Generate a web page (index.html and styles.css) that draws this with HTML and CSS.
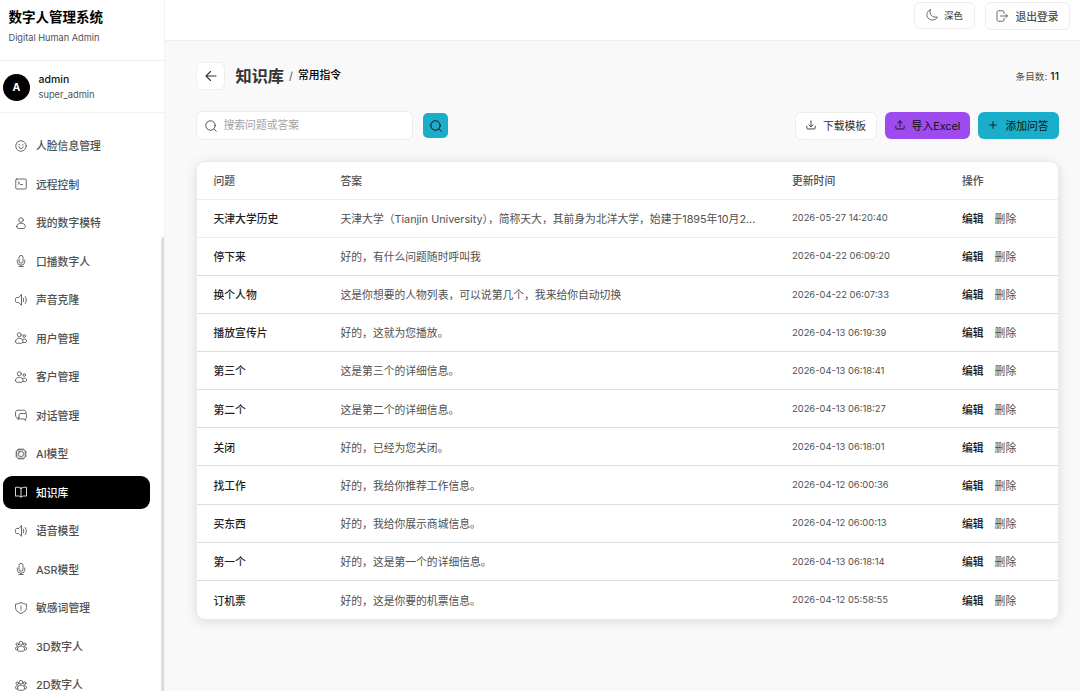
FILE: index.html
```html
<!DOCTYPE html>
<html lang="zh-CN">
<head>
  <meta charset="UTF-8" />
  <meta name="viewport" content="width=device-width, initial-scale=1" />
  <title>数字人管理系统</title>
  <link rel="stylesheet" href="styles.css">
</head>
<body>

  <!-- icons -->
  <svg class="sprite">
    <symbol id="i-face" viewBox="0 0 24 24"><circle cx="12" cy="12" r="10.500"/><path d="M8.500 8.800v1.400M15.500 8.800v1.400M7.500 13.500a4.600 4.600 0 0 0 9 0"/></symbol>
    <symbol id="i-terminal" viewBox="0 0 24 24"><rect x="1.500" y="2" width="21" height="20" rx="2"/><path d="M6 7.500l3.500 2.500L6 12.500M11 13h4"/></symbol>
    <symbol id="i-user" viewBox="0 0 24 24"><circle cx="12" cy="6" r="4.500"/><path d="M3.500 19c0-4.500 3.500-6.500 8.500-6.500s8.500 2 8.500 6.500c0 2.500-1.500 4-3.500 4H7c-2 0-3.500-1.500-3.500-4z"/></symbol>
    <symbol id="i-mic" viewBox="0 0 24 24"><rect x="8" y="0.800" width="8" height="15.500" rx="4"/><path d="M4.500 10v3a7.500 7.500 0 0 0 15 0v-3M12 20.500V23M7.500 23.200h9"/></symbol>
    <symbol id="i-sound" viewBox="0 0 24 24"><path d="M13 1.500v21l-6-5.500H3.500C1.600 17 .6 15.500.6 12S1.600 7 3.500 7H7zM16.500 8c1.300 2.500 1.300 5.500 0 8M20.500 5c3 4.500 3 9.500 0 14"/></symbol>
    <symbol id="i-users" viewBox="0 0 24 24"><circle cx="8.500" cy="5.500" r="4"/><circle cx="18.500" cy="8" r="2.700"/><path d="M1 19c0-4.500 3.500-6.500 7.500-6.500S16 14.500 16 19c0 2-1.300 3.500-3 3.500H4c-1.700 0-3-1.500-3-3.500zM15.500 14.800c3.500-2 7.800-.3 7.800 3.700 0 1.700-1 2.500-2.500 2.500h-5"/></symbol>
    <symbol id="i-chat" viewBox="0 0 24 24"><path d="M8 17H6.500v4.500L3 16.700C1.500 15.500 1 14 1 12V7.500c0-3.500 1.500-5 5-5h11c3.500 0 5 1.500 5 5V9"/><path d="M12 9h8c2 0 3.200 1 3.200 3v4.500c0 1.500-.7 2.500-2.200 3V23l-3-3h-6c-2.500 0-4-1-4-3v-4c0-2.800 1.200-4 4-4z"/></symbol>
    <symbol id="i-chip" viewBox="0 0 24 24"><rect x="3.500" y="3.500" width="17" height="17" rx="3"/><rect x="7.500" y="7.500" width="9" height="9" rx="1"/><path d="M8 1.500v2M12 1.500v2M16 1.500v2M8 20.500v2M12 20.500v2M16 20.500v2M1.500 8h2M1.500 12h2M1.500 16h2M20.500 8h2M20.500 12h2M20.500 16h2"/></symbol>
    <symbol id="i-book" viewBox="0 0 24 24"><path d="M12 4.500C9 2.300 5 2 1 2.800v17.500c4-.8 8-.5 11 1.700 3-2.200 7-2.500 11-1.700V2.800C19 2 15 2.300 12 4.500zM12 4.500V22"/></symbol>
    <symbol id="i-shield" viewBox="0 0 24 24"><path d="M12 1c3 2 6.500 3 11 3.300V11c0 6-4.500 9.500-11 12.200C5.500 20.500 1 17 1 11V4.300C5.500 4 9 3 12 1zM12 8v5.500M12 15.500v1"/></symbol>
    <symbol id="i-team" viewBox="0 0 24 24"><circle cx="12" cy="6.500" r="3.800"/><circle cx="4.500" cy="8.500" r="2.500"/><circle cx="19.500" cy="8.500" r="2.500"/><path d="M5 18.300c0-4 3-6 7-6s7 2 7 6c0 2.500-1.300 4.200-3.500 4.200h-7C6.300 22.500 5 20.800 5 18.300zM5 19.800H3c-3.300 0-2.800-6.300 1.500-6.300h1.500M19 19.800h2c3.300 0 2.800-6.300-1.500-6.300H18"/></symbol>
    <symbol id="i-moon" viewBox="0 0 24 24"><path d="M8.500 1.500C1.500 4.500-.3 12.500 4 18c4.500 6 15 5.500 19-2C13 18 5.500 11 8.500 1.500z"/></symbol>
    <symbol id="i-logout" viewBox="0 0 24 24"><path d="M16 7V4c0-1.500-1-2.500-2.500-2.500h-8C3.500 1.500 2 2.700 2 4.500v15c0 1.800 1.500 3 3.500 3h8c1.500 0 2.500-1 2.500-2.500v-3M9 12h14M19.500 8.500L23 12l-3.500 3.500"/></symbol>
    <symbol id="i-back" viewBox="0 0 24 24"><path d="M22 12H2M11 3l-9 9 9 9"/></symbol>
    <symbol id="i-search" viewBox="0 0 24 24"><circle cx="11" cy="11" r="9.500"/><path d="M18 18l4.500 4.500"/></symbol>
    <symbol id="i-download" viewBox="0 0 24 24"><path d="M12 2v14M7 11.500l5 5 5-5M2 15v4.500c0 1 .8 2 2 2h16c1.200 0 2-1 2-2V15"/></symbol>
    <symbol id="i-upload" viewBox="0 0 24 24"><path d="M12 16V2M6.500 7.500L12 2l5.500 5.500M2 15v4.500c0 1 .8 2 2 2h16c1.200 0 2-1 2-2V15"/></symbol>
    <symbol id="i-plus" viewBox="0 0 24 24"><path d="M12 4v16M4 12h16"/></symbol>
  </svg>

  <div class="app">
    <aside class="sidebar">
      <div class="brand">
        <h1>数字人管理系统</h1>
        <p>Digital Human Admin</p>
      </div>
      <div class="account">
        <span class="avatar">A</span>
        <div>
          <p class="account-name">admin</p>
          <p class="account-role">super_admin</p>
        </div>
      </div>
      <nav class="menu">
        <a class="menu-item"><svg><use href="#i-face"/></svg>人脸信息管理</a>
        <a class="menu-item"><svg><use href="#i-terminal"/></svg>远程控制</a>
        <a class="menu-item"><svg><use href="#i-user"/></svg>我的数字模特</a>
        <a class="menu-item"><svg><use href="#i-mic"/></svg>口播数字人</a>
        <a class="menu-item"><svg><use href="#i-sound"/></svg>声音克隆</a>
        <a class="menu-item"><svg><use href="#i-users"/></svg>用户管理</a>
        <a class="menu-item"><svg><use href="#i-users"/></svg>客户管理</a>
        <a class="menu-item"><svg><use href="#i-chat"/></svg>对话管理</a>
        <a class="menu-item"><svg><use href="#i-chip"/></svg>AI模型</a>
        <a class="menu-item active"><svg><use href="#i-book"/></svg>知识库</a>
        <a class="menu-item"><svg><use href="#i-sound"/></svg>语音模型</a>
        <a class="menu-item"><svg><use href="#i-mic"/></svg>ASR模型</a>
        <a class="menu-item"><svg><use href="#i-shield"/></svg>敏感词管理</a>
        <a class="menu-item"><svg><use href="#i-team"/></svg>3D数字人</a>
        <a class="menu-item"><svg><use href="#i-team"/></svg>2D数字人</a>
      </nav>
      <span class="scroll-thumb"></span>
    </aside>

    <div class="main">
      <header class="topbar">
        <button class="btn btn-theme"><svg><use href="#i-moon"/></svg>深色</button>
        <button class="btn btn-logout"><svg><use href="#i-logout"/></svg>退出登录</button>
      </header>

      <main class="content">
        <div class="page-head">
          <button class="btn btn-back"><svg><use href="#i-back"/></svg></button>
          <h2>知识库</h2>
          <span class="slash">/</span>
          <span class="crumb">常用指令</span>
          <span class="count">条目数: <b>11</b></span>
        </div>

        <div class="toolbar">
          <label class="search">
            <svg><use href="#i-search"/></svg>
            <input type="text" placeholder="搜索问题或答案">
          </label>
          <button class="btn btn-search"><svg><use href="#i-search"/></svg></button>
          <div class="actions">
            <button class="btn btn-template"><svg><use href="#i-download"/></svg>下载模板</button>
            <button class="btn btn-import"><svg><use href="#i-upload"/></svg>导入Excel</button>
            <button class="btn btn-add"><svg><use href="#i-plus"/></svg>添加问答</button>
          </div>
        </div>

        <div class="table">
          <div class="row head"><span>问题</span><span>答案</span><span>更新时间</span><span>操作</span></div>
          <div class="row first"><b>天津大学历史</b><span class="answer">天津大学（Tianjin University），简称天大，其前身为北洋大学，始建于1895年10月2...</span><time>2026-05-27 14:20:40</time><span class="ops"><a class="edit">编辑</a><a>删除</a></span></div>
          <div class="row"><b>停下来</b><span class="answer">好的，有什么问题随时呼叫我</span><time>2026-04-22 06:09:20</time><span class="ops"><a class="edit">编辑</a><a>删除</a></span></div>
          <div class="row"><b>换个人物</b><span class="answer">这是你想要的人物列表，可以说第几个，我来给你自动切换</span><time>2026-04-22 06:07:33</time><span class="ops"><a class="edit">编辑</a><a>删除</a></span></div>
          <div class="row"><b>播放宣传片</b><span class="answer">好的，这就为您播放。</span><time>2026-04-13 06:19:39</time><span class="ops"><a class="edit">编辑</a><a>删除</a></span></div>
          <div class="row"><b>第三个</b><span class="answer">这是第三个的详细信息。</span><time>2026-04-13 06:18:41</time><span class="ops"><a class="edit">编辑</a><a>删除</a></span></div>
          <div class="row"><b>第二个</b><span class="answer">这是第二个的详细信息。</span><time>2026-04-13 06:18:27</time><span class="ops"><a class="edit">编辑</a><a>删除</a></span></div>
          <div class="row"><b>关闭</b><span class="answer">好的，已经为您关闭。</span><time>2026-04-13 06:18:01</time><span class="ops"><a class="edit">编辑</a><a>删除</a></span></div>
          <div class="row"><b>找工作</b><span class="answer">好的，我给你推荐工作信息。</span><time>2026-04-12 06:00:36</time><span class="ops"><a class="edit">编辑</a><a>删除</a></span></div>
          <div class="row"><b>买东西</b><span class="answer">好的，我给你展示商城信息。</span><time>2026-04-12 06:00:13</time><span class="ops"><a class="edit">编辑</a><a>删除</a></span></div>
          <div class="row"><b>第一个</b><span class="answer">好的，这是第一个的详细信息。</span><time>2026-04-13 06:18:14</time><span class="ops"><a class="edit">编辑</a><a>删除</a></span></div>
          <div class="row"><b>订机票</b><span class="answer">好的，这是你要的机票信息。</span><time>2026-04-12 05:58:55</time><span class="ops"><a class="edit">编辑</a><a>删除</a></span></div>
        </div>
      </main>
    </div>
  </div>

</body>
</html>
```
FILE: styles.css
```css
* {
  box-sizing: border-box;
  margin: 0;
  padding: 0;
}

body {
  font-family: Inter, "Noto Sans CJK SC", sans-serif;
  font-size: 10.8px;
  color: #505050;
  background: #f9f9f9;
  overflow: hidden;
}

svg {
  width: 12px;
  height: 12px;
  flex: none;
  fill: none;
  stroke: currentColor;
  stroke-width: 1.7;
  stroke-linecap: round;
  stroke-linejoin: round;
}

.sprite {
  display: none;
}

.app {
  display: flex;
  height: 691px;
}

/* sidebar */
.sidebar {
  position: relative;
  width: 165px;
  flex: none;
  background: #fff;
  border-right: 1px solid #f3f3f3;
  overflow: hidden;
}

.brand {
  height: 61px;
  padding: 8px 8.5px 0;
  border-bottom: 1px solid #eee;
}

.brand h1 {
  font-size: 13.5px;
  line-height: 19px;
  font-weight: 700;
  color: #000;
}

.brand p {
  margin-top: 4px;
  font-size: 9.2px;
  line-height: 14px;
}

.account {
  display: flex;
  align-items: center;
  gap: 8.5px;
  height: 52px;
  padding: 1px 0 0 3px;
  border-bottom: 1px solid #f2f2f2;
}

.avatar {
  width: 27px;
  height: 27px;
  border-radius: 50%;
  background: #000;
  color: #fff;
  font-size: 10.5px;
  font-weight: 700;
  line-height: 27px;
  text-align: center;
}

.account-name {
  font-size: 10.5px;
  line-height: 15px;
  font-weight: 500;
  color: #111;
}

.account-role {
  font-size: 9.3px;
  line-height: 15px;
}

.menu {
  display: flex;
  flex-direction: column;
  gap: 5.5px;
  padding: 16px 14px 0 3px;
}

.menu-item {
  display: flex;
  align-items: center;
  flex: none;
  gap: 9px;
  height: 33px;
  padding: 0 0 1px 12px;
  border-radius: 9px;
  font-weight: 500;
}

.menu-item svg {
  margin-top: 1px;
}

.menu-item.active {
  background: #000;
  color: #fff;
}

.scroll-thumb {
  position: absolute;
  right: -1px;
  top: 237px;
  width: 4px;
  height: 460px;
  border-radius: 2px;
  background: #dedede;
}

/* top bar */
.main {
  flex: 1;
  min-width: 0;
}

.topbar {
  display: flex;
  justify-content: flex-end;
  gap: 10px;
  height: 41px;
  padding: 2px 10px 0 0;
  background: #fff;
  border-bottom: 1px solid #eee;
}

.btn {
  display: flex;
  align-items: center;
  justify-content: center;
  gap: 7px;
  height: 28px;
  padding-bottom: 1px;
  border: 1px solid #eee;
  border-radius: 6px;
  background: #fff;
  color: #333;
  font-family: inherit;
  font-size: 10.8px;
  white-space: nowrap;
}

.btn-theme {
  width: 61px;
  height: 27px;
  gap: 6px;
  font-size: 9.3px;
  font-weight: 500;
  color: #505050;
}

.btn-logout {
  width: 85px;
  font-weight: 500;
  color: #505050;
}

/* page */
.content {
  padding: 21px 21px 0 31px;
}

.page-head {
  display: flex;
  align-items: center;
  height: 28px;
}

.btn-back {
  width: 29px;
  padding: 0;
}

.btn-back svg {
  stroke-width: 2.2;
}

.page-head h2 {
  margin: -3px 0 0 10.5px;
  font-size: 16.2px;
  font-weight: 600;
  color: #333;
}

.slash {
  margin: 0 5px;
}

.crumb {
  margin-top: -4px;
  font-weight: 500;
  color: #000;
}

.count {
  margin: -1px 0 0 auto;
  font-size: 9.6px;
  word-spacing: 0.5px;
}

.count b {
  font-size: 10.4px;
  font-weight: 500;
  color: #111;
}

.toolbar {
  display: flex;
  align-items: center;
  height: 29px;
  margin-top: 21px;
}

.search {
  display: flex;
  align-items: center;
  gap: 6.5px;
  width: 217px;
  height: 29px;
  padding: 0 8px;
  border: 1px solid #ececec;
  border-radius: 6px;
  background: #fff;
}

.search svg {
  stroke-width: 2;
}

.search input {
  flex: 1;
  min-width: 0;
  border: none;
  outline: none;
  background: none;
  font-family: inherit;
  font-size: 10.8px;
}

.search input::placeholder {
  color: #a3a3a3;
}

.btn-search {
  width: 25px;
  height: 25px;
  margin-left: 10px;
  padding: 0;
  border: none;
  border-radius: 5px;
  background: #1aaecb;
  color: #111;
}

.btn-search svg {
  stroke-width: 2;
}

.actions {
  display: flex;
  align-items: center;
  gap: 8px;
  margin-left: auto;
}

.actions svg {
  width: 10px;
  height: 10px;
  stroke-width: 2.2;
}

.btn-template {
  width: 82px;
}

.btn-import {
  width: 85px;
  height: 27px;
  border: none;
  background: #9d4aee;
  color: #111;
}

.btn-add {
  width: 81px;
  height: 27px;
  border: none;
  background: #1aaecb;
  color: #111;
}

/* table */
.table {
  margin-top: 21px;
  border: 1px solid #e9eaec;
  border-radius: 9px;
  background: #fff;
  box-shadow: 0 2px 12px rgba(0, 0, 0, 0.12);
}

.row {
  display: grid;
  grid-template-columns: 127px 451.5px 170px 1fr;
  align-items: center;
  height: 38.15px;
  padding: 0 0 0.5px 16.500px;
  border-bottom: 1px solid #dcdee1;
}

.row.head {
  height: 37.5px;
  font-weight: 500;
  border-color: #eee;
}

.row.first {
  border-color: #eee;
}

.row:last-child {
  border-bottom: none;
}

.row b {
  font-weight: 500;
  color: #1f1f1f;
}

.answer {
  white-space: nowrap;
}

.row time {
  font-size: 9.4px;
}

.ops {
  display: flex;
  gap: 11px;
}

.edit {
  font-weight: 500;
  color: #111;
}
```
